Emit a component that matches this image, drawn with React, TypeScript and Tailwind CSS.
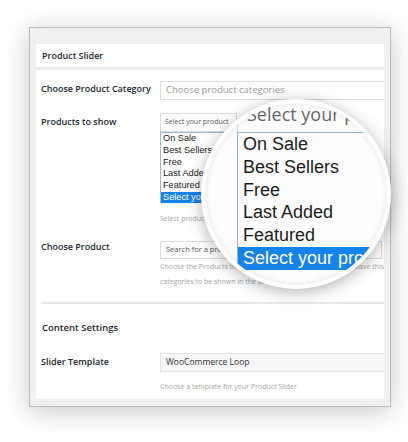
const productTypes = ["On Sale", "Best Sellers", "Free", "Last Added", "Featured", "Select your product"];

const labelCls = "w-[124px] shrink-0 pl-[5px] text-[9px] font-semibold leading-[12px] text-[#23282d]";
const helpCls = "text-[7px] leading-[12px] text-[#a5a5a5] whitespace-nowrap";

const ProductList = ({ big }: { big?: boolean }) => (
    <div
        className={
            big
                ? "w-[220px] border-l border-t border-[#8fb3dd] font-['Liberation_Sans',Arial,sans-serif] text-[18px] leading-[22.75px] text-[#1c1c1c]"
                : "h-[71px] w-[77px] overflow-hidden border-l border-t border-[#9db8d8] font-['Liberation_Sans',Arial,sans-serif] text-[9.2px] leading-[11.8px] text-[#222]"
        }
    >
        {productTypes.map((item, i) => (
            <div
                key={item}
                className={
                    (big ? "pl-[5px] " : "pl-[2px] ") +
                    (i === productTypes.length - 1 ? "bg-[#1683ea] text-white" : "")
                }
            >
                {item}
            </div>
        ))}
    </div>
);

const Magnifier = () => (
    <div className="absolute left-[201px] top-[99px] h-[190px] w-[190px] overflow-hidden rounded-full border-[4px] border-white bg-[#fdfdfd] shadow-[0_3px_16px_rgba(0,0,0,0.3),inset_0_0_6px_rgba(0,0,0,0.1)]">
        <div className="pl-[32px]">
            <div className="h-[29px] w-[200px] border-l border-[#d8d8d8] pl-[9px] text-[18px] leading-[22px] whitespace-nowrap text-[#666]">
                Select your product
            </div>
            <ProductList big />
        </div>
    </div>
);

export default function App() {
    return (
        <div className="relative h-[442px] w-[408px] overflow-hidden bg-white pl-[29px] pt-[27px] font-['Open_Sans',sans-serif]">
            <div className="h-[380px] w-[362px] border border-[#bababa] bg-[#f0f0f0] px-[6px] pb-[7px] pt-[16px] shadow-[0_4px_24px_rgba(0,0,0,0.22)]">
                <div className="flex h-full flex-col overflow-hidden bg-white">
                    <div className="flex h-[23px] shrink-0 items-center pl-[6px] text-[9px] font-semibold text-[#23282d]">
                        Product Slider
                    </div>
                    <div className="h-[3px] shrink-0 bg-[#ececec]" />

                    {/* category */}
                    <div className="mt-[11px] flex">
                        <div className={labelCls + " pt-[2px]"}>Choose Product Category</div>
                        <div className="flex h-[19px] w-[240px] shrink-0 items-center border border-[#dcdcdc] pl-[5px] text-[9.5px] text-[#9a9a9a]">
                            Choose product categories
                        </div>
                    </div>

                    {/* products to show */}
                    <div className="mt-[13px] flex">
                        <div className={labelCls + " pt-[3px]"}>Products to show</div>
                        <div className="flex flex-col">
                            <div className="flex h-[19px] w-[77px] items-center overflow-hidden whitespace-nowrap border border-[#dcdcdc] pl-[4px] text-[7px] text-[#555]">
                                Select your product
                            </div>
                            <ProductList />
                            <div className={helpCls + " mt-[10px]"}>Select product type to show</div>
                        </div>
                    </div>

                    {/* choose product */}
                    <div className="mt-[16px] flex">
                        <div className={labelCls}>Choose Product</div>
                        <div className="flex flex-col">
                            <div className="flex h-[18px] w-[222px] items-center border border-[#dcdcdc] pl-[5px] text-[7.5px] text-[#555]">
                                Search for a product…
                            </div>
                            <div className="text-[7px] leading-[15px] text-[#a5a5a5] whitespace-nowrap">
                                <div>Choose the Products that you want to display in the slider. Leave this</div>
                                <div>categories to be shown in the slider.</div>
                            </div>
                        </div>
                    </div>

                    <div className="ml-[5px] mt-[13px] h-[2px] shrink-0 bg-[#e8e8e8]" />

                    <div className="mt-[18px] pl-[6px] text-[9.5px] font-semibold leading-[12px] text-[#23282d]">
                        Content Settings
                    </div>

                    {/* slider template */}
                    <div className="mt-[19px] flex">
                        <div className={labelCls + " pt-[3px]"}>Slider Template</div>
                        <div className="flex flex-col">
                            <div className="flex h-[19px] w-[240px] items-center border border-[#e4e4e4] bg-[#f6f6f6] pl-[5px] text-[8.5px] text-[#333]">
                                WooCommerce Loop
                            </div>
                            <div className={helpCls + " mt-[9px]"}>Choose a template for your Product Slider</div>
                        </div>
                    </div>
                </div>
            </div>
            <Magnifier />
        </div>
    );
}
